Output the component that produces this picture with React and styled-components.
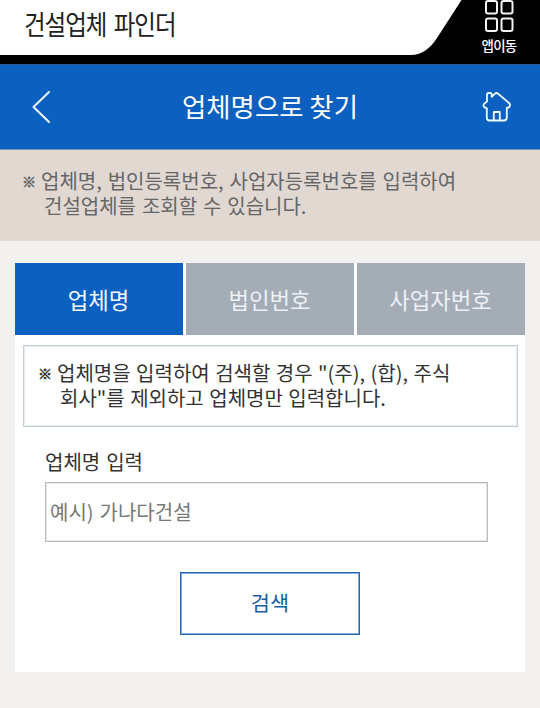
import styled, { createGlobalStyle } from "styled-components";

const GlobalStyle = createGlobalStyle`
    * {
        box-sizing: border-box;
    }

    body {
        margin: 0;
        background-color: #f2f1ef;
        font-family: "Noto Sans CJK KR", "Noto Sans", sans-serif;
        color: #333;
    }

    button, input {
        font-family: inherit;
        margin: 0;
        border-radius: 0;
    }

    p, h1, h2 {
        margin: 0;
        font-weight: 400;
    }
`

const Page = styled.div`
    width: 540px;
    height: 708px;
    overflow: hidden;
`

const TopBar = styled.header`
    height: 64px;
    display: flex;
    background-color: #000;
    overflow: hidden;
`

const BrandArea = styled.div`
    width: 410px;
    height: 55px;
    padding: 6px 0 0 24px;
    background-color: #fff;
`

const Brand = styled.h1`
    width: max-content;
    color: #222;
    font-size: 23.5px;
    line-height: 34px;
    letter-spacing: -1px;
    word-spacing: 3px;
    transform: scaleY(1.16);
`

const BrandEdge = styled.svg`
    width: 54px;
    height: 56px;
    flex: none;
    margin-left: -1px;
`

const AppMove = styled.button`
    width: 50px;
    height: 64px;
    margin-left: 11px;
    padding: 0;
    border: 0;
    background: none;
    color: #fff;
    display: flex;
    flex-direction: column;
    align-items: center;
`

const AppMoveLabel = styled.span`
    font-size: 13.5px;
    font-weight: 500;
    line-height: 20px;
    letter-spacing: -0.8px;
    margin-top: 1px;
`

const TitleBar = styled.div`
    height: 86px;
    padding: 0 28px 0 31px;
    display: grid;
    grid-template-columns: 30px 1fr 30px;
    align-items: center;
    background-color: #0c60c0;
    border-top: 1px solid #2b5c96;
    border-bottom: 1px solid #8095b1;
    color: #fff;
`

const Title = styled.h2`
    padding: 0 3px 2px 0;
    font-size: 26.4px;
    line-height: 38px;
    text-align: center;
`

const IconButton = styled.button`
    padding: 0;
    border: 0;
    background: none;
    color: #eefaff;
    display: flex;
`

const Notice = styled.section`
    height: 91px;
    padding: 18px 22px 0;
    background-color: #e1d8d2;
    color: #666;
`

const HangingText = styled.p`
    font-size: 20px;
    line-height: 25px;
    word-spacing: ${({ $wordSpacing }) => $wordSpacing ? $wordSpacing : "1.4px"};
    white-space: nowrap;
`

const Line = styled.span`
    display: block;
    padding-left: ${({ $indent }) => $indent ? $indent : "0"};
`

const Mark = styled.span`
    display: inline-block;
    width: 19px;
    font-size: 14px;
    line-height: 1;
    vertical-align: 2px;
    -webkit-text-stroke: 0.6px currentColor;
`

const Panel = styled.main`
    width: 510px;
    height: 409px;
    margin: 22px auto 0;
    background-color: #fff;
`

const Tabs = styled.nav`
    display: grid;
    grid-template-columns: repeat(3, 168px);
    gap: 3px;
`

const Tab = styled.button`
    height: 72px;
    padding: 0 1px 1px 0;
    border: 0;
    font-size: 22.3px;
    background-color: ${({ $active }) => $active ? "#0c60c0" : "#a4acb6"};
    color: ${({ $active }) => $active ? "#f4f9ff" : "#edf1f6"};
`

const HelpBox = styled.div`
    height: 82px;
    margin: 10px 7px 0 8px;
    padding: 14px 0 0 14px;
    border: 1px solid #c5d0d5;
    box-shadow: inset 0 0 0 1px #e8edef;
`

const Form = styled.form`
    padding: 22px 37px 0 30px;
    display: flex;
    flex-direction: column;
`

const Label = styled.label`
    font-size: 20px;
    line-height: 26px;
    word-spacing: 1.5px;
`

const Input = styled.input`
    height: 60px;
    margin-top: 7px;
    padding: 0 4px 2px;
    border: 1px solid #bdbdbd;
    box-shadow: inset 0 0 0 1px #e4e4e4;
    background-color: #fff;
    font-size: 20px;
    word-spacing: 1.5px;
    outline: 0;

    &::placeholder {
        color: #777;
        opacity: 1;
    }
`

const SearchButton = styled.button`
    width: 180px;
    height: 63px;
    margin: 30px 0 0 135px;
    padding: 0 0 3px;
    border: 1px solid #2465a9;
    box-shadow: inset 0 0 0 1px #86b0dc;
    background-color: #fff;
    color: #1b5ca3;
    font-size: 20.8px;
`

const tabs = ["업체명", "법인번호", "사업자번호"];

function GridIcon() {
    return (
        <svg width="32" height="34" viewBox="0 0 32 34" fill="none" stroke="#f4f4f4" strokeWidth="2">
            <rect x="3" y="1" width="11" height="12.5" rx="2" />
            <rect x="18.5" y="1" width="11" height="12.5" rx="2" />
            <rect x="3" y="18.5" width="11" height="12.5" rx="2" />
            <rect x="18.5" y="18.5" width="11" height="12.5" rx="2" />
        </svg>
    )
}

function BackIcon() {
    return (
        <svg width="20" height="34" viewBox="0 0 20 34" fill="none" stroke="currentColor" strokeWidth="2" strokeLinecap="round" strokeLinejoin="round">
            <path d="M18 2 L2.5 17 L18 32" />
        </svg>
    )
}

function HomeIcon() {
    return (
        <svg width="30" height="32" viewBox="0 0 30 32" fill="none" stroke="currentColor" strokeWidth="1.8" strokeLinecap="round" strokeLinejoin="round">
            <path d="M5 10.5 V3.8 Q5 2 6.8 2 H8 Q9.7 2 9.7 3.8 V5.8 L13 2.6 Q14.5 1.3 16 2.6 L27 12 Q28.8 13.8 27.5 15.6 Q26.7 16.7 24.8 17 V26.5 Q24.8 29.5 22 29.5 H7.5 Q4.8 29.5 4.8 26.5 V17.2 Q2.5 16.8 1.8 15.5 Q0.8 13.5 3 12 Z" />
            <path d="M11.8 29 V21 H17.8 V29" />
        </svg>
    )
}

export default function App() {
    return (
        <Page>
            <GlobalStyle />
            <TopBar>
                <BrandArea>
                    <Brand>건설업체 파인더</Brand>
                </BrandArea>
                <BrandEdge viewBox="0 0 54 56">
                    <path d="M0 0 H52.5 L28 38 Q17 55 2 55 H0 Z" fill="#fff" />
                </BrandEdge>
                <AppMove type="button">
                    <GridIcon />
                    <AppMoveLabel>앱이동</AppMoveLabel>
                </AppMove>
            </TopBar>
            <TitleBar>
                <IconButton type="button" aria-label="뒤로">
                    <BackIcon />
                </IconButton>
                <Title>업체명으로 찾기</Title>
                <IconButton type="button" aria-label="홈">
                    <HomeIcon />
                </IconButton>
            </TitleBar>
            <Notice>
                <HangingText>
                    <Line><Mark>※</Mark>업체명, 법인등록번호, 사업자등록번호를 입력하여</Line>
                    <Line $indent="22px">건설업체를 조회할 수 있습니다.</Line>
                </HangingText>
            </Notice>
            <Panel>
                <Tabs>
                    {tabs.map((name, i) => (
                        <Tab key={name} type="button" $active={i === 0}>{name}</Tab>
                    ))}
                </Tabs>
                <HelpBox>
                    <HangingText $wordSpacing="1px">
                        <Line><Mark>※</Mark>업체명을 입력하여 검색할 경우 "(주), (합), 주식</Line>
                        <Line $indent="22px">회사"를 제외하고 업체명만 입력합니다.</Line>
                    </HangingText>
                </HelpBox>
                <Form>
                    <Label htmlFor="company">업체명 입력</Label>
                    <Input id="company" placeholder="예시) 가나다건설" />
                    <SearchButton type="button">검색</SearchButton>
                </Form>
            </Panel>
        </Page>
    )
}
